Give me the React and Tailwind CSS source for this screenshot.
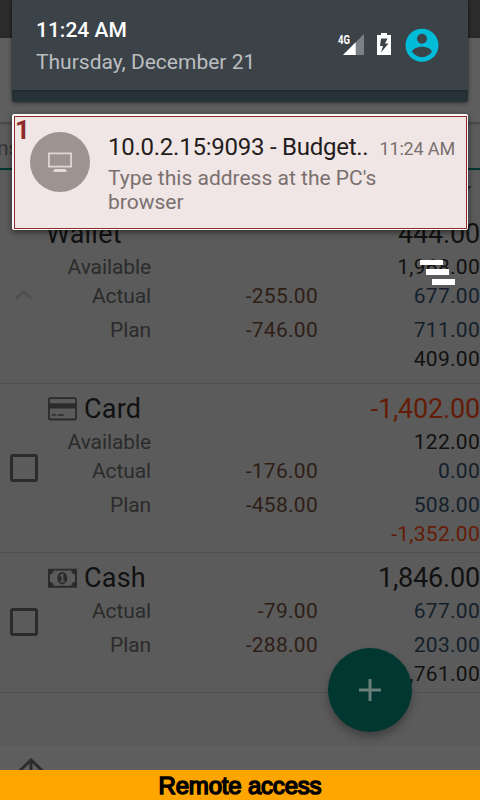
const accounts = [
  {
    name: "Wallet",
    total: "444.00",
    available: "1,968.00",
    actual: ["-255.00", "677.00"],
    plan: ["-746.00", "711.00"],
    rest: "409.00",
    control: "chevron",
  },
  {
    name: "Card",
    total: "-1,402.00",
    available: "122.00",
    actual: ["-176.00", "0.00"],
    plan: ["-458.00", "508.00"],
    rest: "-1,352.00",
    control: "checkbox",
    icon: "card",
  },
  {
    name: "Cash",
    total: "1,846.00",
    actual: ["-79.00", "677.00"],
    plan: ["-288.00", "203.00"],
    rest: "1,761.00",
    control: "checkbox",
    icon: "cash",
  },
];

const sign = (v) => (v && v.startsWith("-") ? "text-[#641c06]" : "text-[#111111]");

function CardIcon() {
  return (
    <svg className="h-6 w-[29px]" viewBox="0 0 29 24" fill="none">
      <rect x="0.9" y="1.1" width="27.2" height="21.4" rx="1.4" stroke="#2b2b2b" strokeWidth="1.8" />
      <rect x="1" y="6.3" width="27" height="5.2" fill="#2b2b2b" />
      <path d="M3.8 18h4M9.6 18h6" stroke="#2b2b2b" strokeWidth="1.7" />
    </svg>
  );
}

function CashIcon() {
  return (
    <svg className="-mt-px h-5 w-[29px]" viewBox="0 0 29 20">
      <path
        fill="#2b2b2b"
        fillRule="evenodd"
        d="M0 .7h29v19H0zM5.6 2.6C5.4 5 4.2 6.3 2 6.5v7.4c2.2.2 3.4 1.5 3.6 3.9h17.8c.2-2.4 1.4-3.7 3.6-3.9V6.5c-2.2-.2-3.400-1.500-3.600-3.900z"
      />
      <ellipse cx="14.3" cy="10.2" rx="5" ry="6.2" fill="#2b2b2b" />
      <path d="M12.300 8l2.200-1.500v6.700M12.100 13.500h4.600" fill="none" stroke="#5b5b5b" strokeWidth="1.700" />
    </svg>
  );
}

function Control({ type }) {
  if (type === "chevron") {
    return (
      <svg className="ml-[15px] h-[10px] w-[18px]" viewBox="0 0 18 10" fill="none">
        <path d="M1 8.800L8.500 1.700L16.500 8.800" stroke="#4d4d4d" strokeWidth="2.200" />
      </svg>
    );
  }
  return <div className="ml-[10px] size-7 rounded-[3px] border-[3px] border-[#2b2b2b]" />;
}

function Line({ label, out, value, tone }) {
  return (
    <div className="flex h-[29px] items-center text-[21px] leading-[29px]">
      <span className="w-[103px] text-right tracking-[-0.1px] text-[#2b2b2b]">{label}</span>
      <span className="w-[167px] text-right tracking-[0.28px] text-[#2e1e16]">{out}</span>
      <span className={`flex-1 text-right tracking-[0.28px] ${tone}`}>{value}</span>
    </div>
  );
}

function Account({ a }) {
  const chevron = a.control === "chevron";
  return (
    <div className={`flex border-b border-[#505050] ${chevron ? "pb-[9px]" : "pb-[3px]"}`}>
      <div className={`flex w-12 items-center ${chevron ? "pt-[6px]" : "pt-[2px]"}`}>
        <Control type={a.control} />
      </div>
      <div className="flex-1">
        <div className="mt-[9px] mb-[3px] flex h-8 items-center text-[27px] leading-8">
          {a.icon && (
            <span className="mr-[7px] flex w-[29px]">{a.icon === "card" ? <CardIcon /> : <CashIcon />}</span>
          )}
          <span className={`tracking-[0.2px] text-[#111111] ${a.icon ? "" : "-ml-[2px]"}`}>{a.name}</span>
          <span className={`flex-1 text-right tracking-[-0.18px] ${sign(a.total)}`}>{a.total}</span>
        </div>
        {a.available && <Line label="Available" value={a.available} tone="text-[#111111]" />}
        <Line label="Actual" out={a.actual[0]} value={a.actual[1]} tone="text-[#141f2c]" />
        <div className="pt-[5px]">
          <Line label="Plan" out={a.plan[0]} value={a.plan[1]} tone="text-[#141f2c]" />
        </div>
        <Line value={a.rest} tone={sign(a.rest)} />
      </div>
    </div>
  );
}

function Shade() {
  return (
    <header className="absolute top-0 left-3 w-[456px] rounded-b-[3px] bg-[#263238] pb-3 shadow-[0_1px_4px_rgba(0,0,0,0.5)]">
      <div className="flex h-[90px] bg-[#3b4349] pl-6 shadow-[0_1px_2px_rgba(0,0,0,0.3)]">
        <div className="flex flex-1 flex-col pt-[14px] text-[21px] leading-8">
          <span className="font-medium text-white">11:24 AM</span>
          <span className="text-[#bbbec0]">Thursday, December 21</span>
        </div>
        <svg className="mt-[26px] mr-5 h-[38px] w-[110px]" viewBox="338 26 110 38">
          <text x="338" y="44" fill="#fff" fontFamily="Roboto" fontWeight="700" fontSize="12.500" textLength="12" lengthAdjust="spacingAndGlyphs">
            4G
          </text>
          <path d="M364 34v21h-21z" fill="#7b8185" />
          <path d="M355.700 42.300v12.700h-12.700z" fill="#fff" />
          <path d="M381 33h6v2h4v20h-14V35h4zM381 38.500l-1 7.500h3l-2 6.500 7.500-9h-3.500l2.500-5z" fill="#fff" fillRule="evenodd" />
          <path
            transform="translate(402.200 25.500) scale(1.650)"
            fill="#00bcd8"
            d="M12 2C6.480 2 2 6.480 2 12s4.480 10 10 10 10-4.480 10-10S17.520 2 12 2zm0 3c1.660 0 3 1.340 3 3s-1.340 3-3 3-3-1.340-3-3 1.340-3 3-3zm0 14.200c-2.500 0-4.710-1.280-6-3.220.03-1.990 4-3.080 6-3.080 1.990 0 5.970 1.090 6 3.080-1.290 1.940-3.500 3.220-6 3.220z"
          />
        </svg>
      </div>
    </header>
  );
}

function Notification() {
  return (
    <section className="absolute top-[114px] left-3 h-[116px] w-[456px] rounded-[2px] bg-[#fbf9f9] pt-[2px] pr-px pb-px pl-[2px] shadow-[0_2px_6px_rgba(0,0,0,0.55)]">
      <div className="flex h-full border border-[#8f2a2c] bg-[#f0e6e5]">
        <span className="h-[26px] w-[15px] text-[26px] leading-[26px] font-bold text-[#8f2a2c]">1</span>
        <div className="mt-[15px] flex size-[60px] shrink-0 items-center justify-center rounded-full bg-[#9d9391]">
          <svg className="h-5 w-6" viewBox="0 0 24 20">
            <rect x="0.900" y="1.400" width="22.200" height="13.200" fill="none" stroke="#e2dad8" strokeWidth="1.700" />
            <path d="M6.500 17h11l1.500 3h-14z" fill="#e2dad8" />
          </svg>
        </div>
        <div className="ml-[18px] flex-1 pt-[16px] pr-[11px]">
          <div className="flex items-baseline justify-between whitespace-nowrap">
            <h1 className="text-[24px] leading-7 tracking-[-0.25px] text-[#241d1c]">10.0.2.15:9093 - Budget..</h1>
            <time className="text-[18px] leading-7 tracking-[-0.15px] text-[#7a706f]">11:24 AM</time>
          </div>
          <p className="mt-[3px] w-[300px] text-[21px] leading-6 text-[#7a706f]">Type this address at the PC's browser</p>
        </div>
      </div>
    </section>
  );
}

export default function App() {
  return (
    <div className="relative flex h-[800px] w-[480px] flex-col overflow-hidden bg-[#5b5b5b] font-[Roboto,sans-serif]">
      <div className="h-[38px] shrink-0 bg-[#2b2b2b]" />
      <div className="h-[84px] shrink-0 bg-[#5e5e5e] shadow-[0_1px_3px_rgba(0,0,0,0.35)]" />
      <div className="flex h-12 shrink-0 items-center border-b-2 border-[#003731] text-[21px] text-[#333333]">
        <span className="-ml-[3px] pt-2">ns</span>
      </div>
      <div className="flex h-[39px] shrink-0 items-center justify-end pr-2">
        <svg className="h-2 w-4" viewBox="0 0 16 8">
          <path d="M0 0h16l-8 8z" fill="#2b2b2b" />
        </svg>
      </div>
      <main>
        {accounts.map((a) => (
          <Account key={a.name} a={a} />
        ))}
      </main>
      <div className="h-[53px] shrink-0" />
      <div className="flex h-6 shrink-0 bg-[#5e5e5e]">
        <svg className="mt-3 ml-[17px] h-3 w-7" viewBox="0 0 28 12" fill="none">
          <path d="M1 14.500L14 1.800L27 14.500M14 2v12" stroke="#2b2b2b" strokeWidth="2.800" />
        </svg>
      </div>
      <footer className="h-[30px] shrink-0 bg-[#ffa500] text-center font-['Liberation_Sans'] text-[24px] leading-[32px] tracking-[-0.2px] text-black [-webkit-text-stroke:1.5px_#000]">
        Remote access
      </footer>

      <button className="absolute top-[648px] left-[328px] flex size-[84px] items-center justify-center rounded-full bg-[#003731] shadow-[0_5px_8px_rgba(0,0,0,0.3)]">
        <svg className="size-[22px]" viewBox="0 0 22 22">
          <path d="M0 11h22M11 0v22" stroke="#6b7f7b" strokeWidth="3" />
        </svg>
      </button>
      <div className="absolute top-[260px] left-[420px] flex flex-col gap-[4px]">
        <span className="h-[5px] w-[23px] bg-white" />
        <span className="ml-[6px] h-[6px] w-[23px] bg-white" />
        <span className="ml-3 h-[6px] w-[23px] bg-white" />
      </div>
      <Shade />
      <Notification />
    </div>
  );
}
